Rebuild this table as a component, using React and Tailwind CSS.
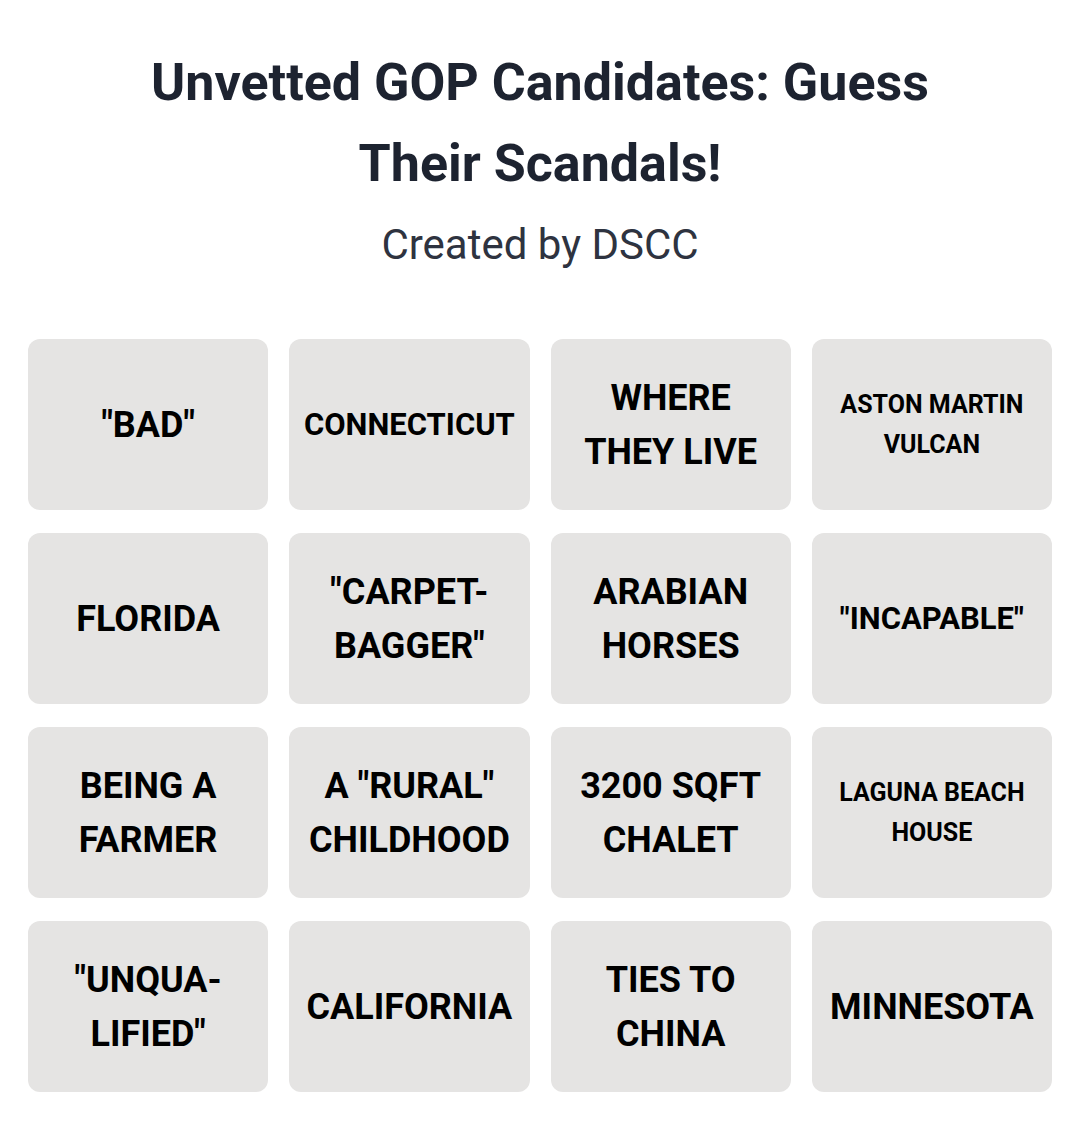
import React from "react";

const big = "text-[36px] leading-[54px]";
const small = "text-[25px] leading-[40px]";

const tiles = [
  { lines: ['"BAD"'], size: big },
  { lines: ["CONNECTICUT"], size: "text-[31px] leading-[54px]" },
  { lines: ["WHERE", "THEY LIVE"], size: big },
  { lines: ["ASTON MARTIN", "VULCAN"], size: small },
  { lines: ["FLORIDA"], size: big },
  { lines: ['"CARPET-', 'BAGGER"'], size: big },
  { lines: ["ARABIAN", "HORSES"], size: big },
  { lines: ['"INCAPABLE"'], size: "text-[31px] leading-[54px]" },
  { lines: ["BEING A", "FARMER"], size: big },
  { lines: ['A "RURAL"', "CHILDHOOD"], size: big },
  { lines: ["3200 SQFT", "CHALET"], size: big },
  { lines: ["LAGUNA BEACH", "HOUSE"], size: small },
  { lines: ['"UNQUA-', 'LIFIED"'], size: big },
  { lines: ["CALIFORNIA"], size: big },
  { lines: ["TIES TO", "CHINA"], size: big },
  { lines: ["MINNESOTA"], size: big },
];

export default function App() {
  return (
    <div className="min-h-[1127px] bg-white font-['Roboto',sans-serif] pl-[28px] pr-[27px] pt-[42px]">
      <h1 className="text-center text-[52px] leading-[81px] font-bold text-[#1d2330]">
        Unvetted GOP Candidates: Guess
        <br />
        Their Scandals!
      </h1>
      <p className="mt-[14px] text-center text-[42px] leading-[54px] text-[#2e3340]">
        Created by DSCC
      </p>
      <div className="mt-[67px] grid grid-cols-4 gap-x-[21px] gap-y-[23px]">
        {tiles.map((t, i) => (
          <div
            key={i}
            className="h-[171px] rounded-[12px] bg-[#e5e4e3] flex flex-col items-center justify-center text-center px-1"
          >
            {t.lines.map((l, j) => (
              <div key={j} className={`font-bold text-black whitespace-nowrap ${t.size}`}>
                {l}
              </div>
            ))}
          </div>
        ))}
      </div>
    </div>
  );
}
